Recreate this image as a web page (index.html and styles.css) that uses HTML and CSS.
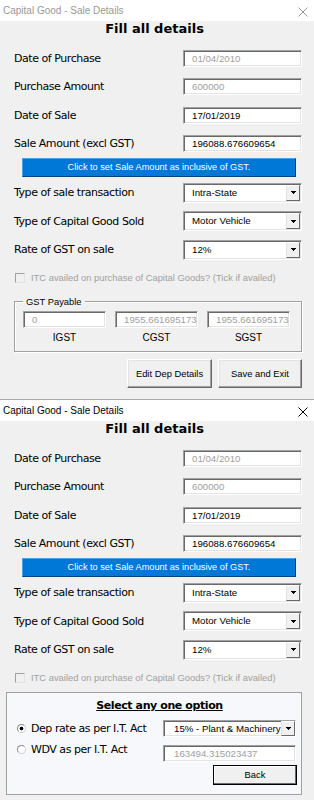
FILE: index.html
```html
<!DOCTYPE html>
<html lang="en">
<head>
  <meta charset="UTF-8">
  <meta name="viewport" content="width=device-width, initial-scale=1.0">
  <title>Capital Good - Sale Details</title>
  <link rel="stylesheet" href="styles.css">
</head>
<body>

  <!-- Sale details, GST payable view (inactive window) -->
  <div class="window inactive">
    <div class="titlebar">
      <span>Capital Good - Sale Details</span>
      <svg class="close" width="10" height="10" viewBox="0 0 10 10"><path d="M0.5 0.5L9.5 9.5M9.5 0.5L0.5 9.5"/></svg>
    </div>
    <div class="form">
      <h1>Fill all details</h1>
      <div class="rows">
        <div class="row"><label>Date of Purchase</label><div class="box disabled">01/04/2010</div></div>
        <div class="row"><label>Purchase Amount</label><div class="box disabled">600000</div></div>
        <div class="row"><label>Date of Sale</label><div class="box">17/01/2019</div></div>
        <div class="row"><label>Sale Amount (excl GST)</label><div class="box">196088.676609654</div></div>
      </div>
      <button class="gst-btn">Click to set Sale Amount as inclusive of GST.</button>
      <div class="combos">
        <div class="row"><label>Type of sale transaction</label><div class="box combo"><span>Intra-State</span><span class="drop"><svg width="5" height="3"><rect x="0" y="0" width="5" height="1"/><rect x="1" y="1" width="3" height="1"/><rect x="2" y="2" width="1" height="1"/></svg></span></div></div>
        <div class="row"><label>Type of Capital Good Sold</label><div class="box combo"><span>Motor Vehicle</span><span class="drop"><svg width="5" height="3"><rect x="0" y="0" width="5" height="1"/><rect x="1" y="1" width="3" height="1"/><rect x="2" y="2" width="1" height="1"/></svg></span></div></div>
        <div class="row"><label>Rate of GST on sale</label><div class="box combo"><span>12%</span><span class="drop"><svg width="5" height="3"><rect x="0" y="0" width="5" height="1"/><rect x="1" y="1" width="3" height="1"/><rect x="2" y="2" width="1" height="1"/></svg></span></div></div>
      </div>
      <div class="check"><span class="tick"></span>ITC availed on purchase of Capital Goods? (Tick if availed)</div>
      <fieldset class="gst">
        <legend>GST Payable</legend>
        <div class="gst-grid">
          <div class="box disabled">0</div>
          <div class="box disabled">1955.661695173</div>
          <div class="box disabled">1955.661695173</div>
          <span>IGST</span>
          <span>CGST</span>
          <span>SGST</span>
        </div>
      </fieldset>
      <div class="actions">
        <button class="btn edit">Edit Dep Details</button>
        <button class="btn save">Save and Exit</button>
      </div>
    </div>
  </div>

  <!-- Sale details, depreciation option view -->
  <div class="window">
    <div class="titlebar">
      <span>Capital Good - Sale Details</span>
      <svg class="close" width="10" height="10" viewBox="0 0 10 10"><path d="M0.5 0.5L9.5 9.5M9.5 0.5L0.5 9.5"/></svg>
    </div>
    <div class="form">
      <h1>Fill all details</h1>
      <div class="rows">
        <div class="row"><label>Date of Purchase</label><div class="box disabled">01/04/2010</div></div>
        <div class="row"><label>Purchase Amount</label><div class="box disabled">600000</div></div>
        <div class="row"><label>Date of Sale</label><div class="box">17/01/2019</div></div>
        <div class="row"><label>Sale Amount (excl GST)</label><div class="box">196088.676609654</div></div>
      </div>
      <button class="gst-btn">Click to set Sale Amount as inclusive of GST.</button>
      <div class="combos">
        <div class="row"><label>Type of sale transaction</label><div class="box combo"><span>Intra-State</span><span class="drop"><svg width="5" height="3"><rect x="0" y="0" width="5" height="1"/><rect x="1" y="1" width="3" height="1"/><rect x="2" y="2" width="1" height="1"/></svg></span></div></div>
        <div class="row"><label>Type of Capital Good Sold</label><div class="box combo"><span>Motor Vehicle</span><span class="drop"><svg width="5" height="3"><rect x="0" y="0" width="5" height="1"/><rect x="1" y="1" width="3" height="1"/><rect x="2" y="2" width="1" height="1"/></svg></span></div></div>
        <div class="row"><label>Rate of GST on sale</label><div class="box combo"><span>12%</span><span class="drop"><svg width="5" height="3"><rect x="0" y="0" width="5" height="1"/><rect x="1" y="1" width="3" height="1"/><rect x="2" y="2" width="1" height="1"/></svg></span></div></div>
      </div>
      <div class="check"><span class="tick"></span>ITC availed on purchase of Capital Goods? (Tick if availed)</div>
      <div class="options">
        <h2>Select any one option</h2>
        <div class="opt-row">
          <div class="opt"><span class="radio on"></span>Dep rate as per I.T. Act</div>
          <div class="box combo small"><span>15% - Plant &amp; Machinery</span><span class="drop"><svg width="5" height="3"><rect x="0" y="0" width="5" height="1"/><rect x="1" y="1" width="3" height="1"/><rect x="2" y="2" width="1" height="1"/></svg></span></div>
        </div>
        <div class="opt-row">
          <div class="opt up"><span class="radio"></span>WDV as per I.T. Act</div>
          <div class="box small disabled">163494.315023437</div>
        </div>
        <button class="btn back">Back</button>
      </div>
    </div>
  </div>

</body>
</html>
```

FILE: styles.css
```css
* {
  box-sizing: border-box;
}
body {
  margin: 0;
  background-color: #f0f0f0;
  font-family: "Liberation Sans", Arial, sans-serif;
  font-size: 9.4px;
  color: #000;
}
.window {
  background-color: #f0f0f0;
}
.window + .window {
  border-top: 1px solid #a9a9a9;
}
.titlebar {
  height: 21px;
  background-color: #fff;
  display: flex;
  align-items: center;
  justify-content: space-between;
  padding: 0 6px 0 3px;
  font-size: 10px;
}
.inactive .titlebar {
  color: #999;
}
.close {
  margin-top: 3px;
  stroke: currentColor;
  stroke-width: 1;
  fill: none;
}
.form {
  padding: 0 12px 11px 14px;
}
h1 {
  margin: 0;
  height: 21px;
  line-height: 21px;
  padding-right: 7px;
  text-align: center;
  font: bold 13px "DejaVu Sans", sans-serif;
}
.rows {
  margin-top: 8px;
  display: flex;
  flex-direction: column;
  gap: 11.33px;
}
.row {
  display: flex;
  align-items: center;
  justify-content: space-between;
}
.row label, .opt {
  font: 11px "DejaVu Sans", sans-serif;
  letter-spacing: -0.45px;
}
.box {
  width: 119px;
  height: 17px;
  background-color: #fff;
  border: 1px solid;
  border-color: #a0a0a0 #fff #fff #a0a0a0;
  box-shadow: inset 1px 1px #696969, inset -1px -1px #e3e3e3;
  padding-left: 8px;
  font-size: 9.7px;
  line-height: 15px;
  white-space: nowrap;
  overflow: hidden;
}
.box.disabled {
  color: #a0a0a0;
}
.combo {
  height: 20px;
  display: flex;
  justify-content: space-between;
  align-items: stretch;
  padding: 1px 1px 1px 8px;
  line-height: 16px;
}
.drop {
  width: 14px;
  flex: none;
  display: flex;
  align-items: center;
  justify-content: center;
  background-color: #f0f0f0;
  border: 1px solid;
  border-color: #fff #696969 #696969 #e3e3e3;
}
.gst-btn {
  display: block;
  width: 274px;
  height: 19px;
  margin: 6px 0 0 8px;
  padding: 0;
  background-color: #0078d7;
  color: #fff;
  border: 1px solid;
  border-color: #4aa0e8 #00427a #00427a #4aa0e8;
  font: 9.2px "Liberation Sans", Arial, sans-serif;
}
.combos {
  margin-top: 6px;
  display: flex;
  flex-direction: column;
  gap: 8.5px;
}
.check {
  margin-top: 12px;
  height: 12px;
  display: flex;
  align-items: center;
  gap: 6px;
  color: #a0a0a0;
}
.tick {
  width: 10px;
  height: 10px;
  margin-left: 1px;
  border: 1px solid;
  border-color: #a0a0a0 #e3e3e3 #e3e3e3 #a0a0a0;
  background-color: #f0f0f0;
}
.gst {
  margin: 11px 0 0;
  padding: 2px 13px 6px 8px;
  min-width: 0;
  border: 1px solid #a0a0a0;
  box-shadow: 1px 1px #fff, inset 1px 1px #fff;
}
.gst legend {
  padding: 0 3px;
  line-height: 14px;
}
.gst-grid {
  display: grid;
  grid-template-columns: repeat(3, 83px);
  column-gap: 9px;
  row-gap: 3px;
}
.gst-grid .box {
  width: 100%;
}
.gst-grid span {
  text-align: center;
  line-height: 14px;
  font-size: 10px;
}
.actions {
  display: flex;
  justify-content: flex-end;
  gap: 6px;
  margin-top: 7px;
}
.btn {
  height: 29px;
  padding: 0;
  background-color: #f0f0f0;
  border: 1px solid;
  border-color: #fff #696969 #696969 #fff;
  box-shadow: inset -1px -1px #a0a0a0, inset 1px 1px #e3e3e3;
  font: 9.4px "Liberation Sans", Arial, sans-serif;
  color: #000;
}
.edit {
  width: 85px;
}
.save {
  width: 84px;
}
.options {
  margin: 8px 0 0 -8px;
  height: 103px;
  padding: 6px 5px 6px 10px;
  background-color: #f6f8fc;
  border: 1px solid #a0a0a0;
}
.options h2 {
  margin: 0;
  padding-left: 6px;
  line-height: 16px;
  text-align: center;
  text-decoration: underline;
  font: bold 11px "DejaVu Sans", sans-serif;
  letter-spacing: -0.4px;
}
.opt-row {
  display: flex;
  align-items: center;
  justify-content: space-between;
  margin-top: 8px;
}
.opt {
  display: flex;
  align-items: center;
  gap: 5px;
}
.opt.up {
  align-self: flex-start;
  line-height: 13px;
  margin-top: -2px;
}
.radio {
  width: 9px;
  height: 9px;
  border-radius: 50%;
  border: 1px solid;
  border-color: #8a8a8a #d0d0d0 #d0d0d0 #8a8a8a;
  background-color: #fff;
}
.radio.on {
  background: radial-gradient(circle, #000 1.6px, #fff 2.2px);
}
.box.small {
  width: 133px;
  height: 17px;
  padding-left: 10px;
}
.combo.small {
  padding: 0 0 0 10px;
  line-height: 15px;
}
.back {
  display: block;
  width: 84px;
  height: 20px;
  margin: 3px -1px 0 auto;
  border-color: #000;
  box-shadow: inset -1px -1px #696969, inset 1px 1px #fff;
}
```
